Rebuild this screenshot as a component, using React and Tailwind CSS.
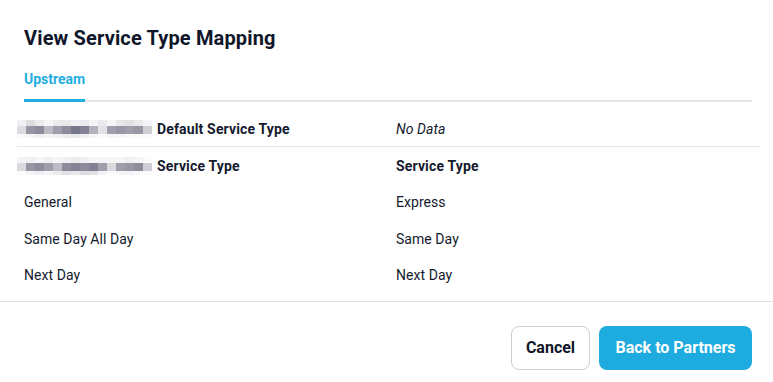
import React from 'react';

const blurRow1 = [
  [0.08, 0.18, 0.1, 0.06, 0.1, 0.12, 0.08, 0.1, 0.05, 0.1, 0.05, 0.12, 0.15, 0.1, 0.05],
  [0.18, 0.55, 0.6, 0.35, 0.5, 0.6, 0.7, 0.65, 0.4, 0.15, 0.5, 0.55, 0.5, 0.55, 0.25],
  [0.02, 0.05, 0.08, 0.05, 0.08, 0.1, 0.12, 0.08, 0.05, 0.02, 0.05, 0.05, 0.03, 0.03, 0.02],
];
const blurRow2 = [
  [0.05, 0.08, 0.05, 0.08, 0.05, 0.08, 0.1, 0.08, 0.05, 0.05, 0.05, 0.05, 0.08, 0.05, 0.02],
  [0.2, 0.55, 0.6, 0.5, 0.35, 0.6, 0.65, 0.6, 0.65, 0.5, 0.2, 0.5, 0.55, 0.6, 0.25],
  [0.02, 0.05, 0.08, 0.05, 0.1, 0.15, 0.12, 0.18, 0.15, 0.05, 0.02, 0.05, 0.05, 0.03, 0.02],
];

function Blurred({ grid }) {
  return (
    <div className="flex flex-col -ml-[7px] mr-[5px]">
      {grid.map((row, r) => (
        <div key={r} className={`flex ${r === 0 ? 'h-[6px]' : r === 1 ? 'h-[8px]' : 'h-[4px]'}`}>
          {row.map((o, c) => (
            <div key={c} className="w-[9px] h-full bg-[#3f3f5a]" style={{ opacity: o }} />
          ))}
        </div>
      ))}
    </div>
  );
}

const rows = [
  ['General', 'Express'],
  ['Same Day All Day', 'Same Day'],
  ['Next Day', 'Next Day'],
];

export default function App() {
  return (
    <div className="w-[773px] h-[382px] bg-white text-[#141a2e] overflow-hidden" style={{ fontFamily: 'Roboto, "Noto Sans", sans-serif' }}>
      <div className="px-6 pt-[26px]">
        <h1 className="text-[20px] leading-6 font-bold tracking-[0.15px] text-[#0f1629]">View Service Type Mapping</h1>
        <div className="mt-[19px] flex border-b-2 border-[#e6e6e6] w-[728px]">
          <div className="text-sm font-bold text-[#1faee2] leading-5 pb-[10px] border-b-[3px] border-[#1faee2] -mb-[2px]">Upstream</div>
        </div>
      </div>

      <div className="ml-[17px] mr-[13px] mt-[9px] text-sm tracking-[0.05px]">
        <div className="flex items-center h-[36px] border-b border-[#e6e6e6] pl-[7px]">
          <div className="w-[372px] flex items-center font-bold tracking-[0.15px]">
            <Blurred grid={blurRow1} />
            <span>Default Service Type</span>
          </div>
          <div className="italic">No Data</div>
        </div>
        <div className="flex items-center h-[37px] pl-[7px] font-bold tracking-[0.15px]">
          <div className="w-[372px] flex items-center">
            <Blurred grid={blurRow2} />
            <span>Service Type</span>
          </div>
          <div>Service Type</div>
        </div>
        {rows.map(([a, b], i) => (
          <div key={i} className="flex items-center h-[36.5px] pl-[7px]">
            <div className="w-[372px]">{a}</div>
            <div>{b}</div>
          </div>
        ))}
      </div>

      <div className="mt-[7px] border-t border-[#e0e0e0] flex justify-end gap-[9px] pr-[21px] pt-[24px]">
        <button className="h-[44px] w-[79px] rounded-lg border border-[#cfcfcf] bg-white text-base font-bold text-[#0f1629]">Cancel</button>
        <button className="h-[44px] w-[153px] rounded-lg bg-[#1eabdf] text-base font-bold text-white">Back to Partners</button>
      </div>
    </div>
  );
}
